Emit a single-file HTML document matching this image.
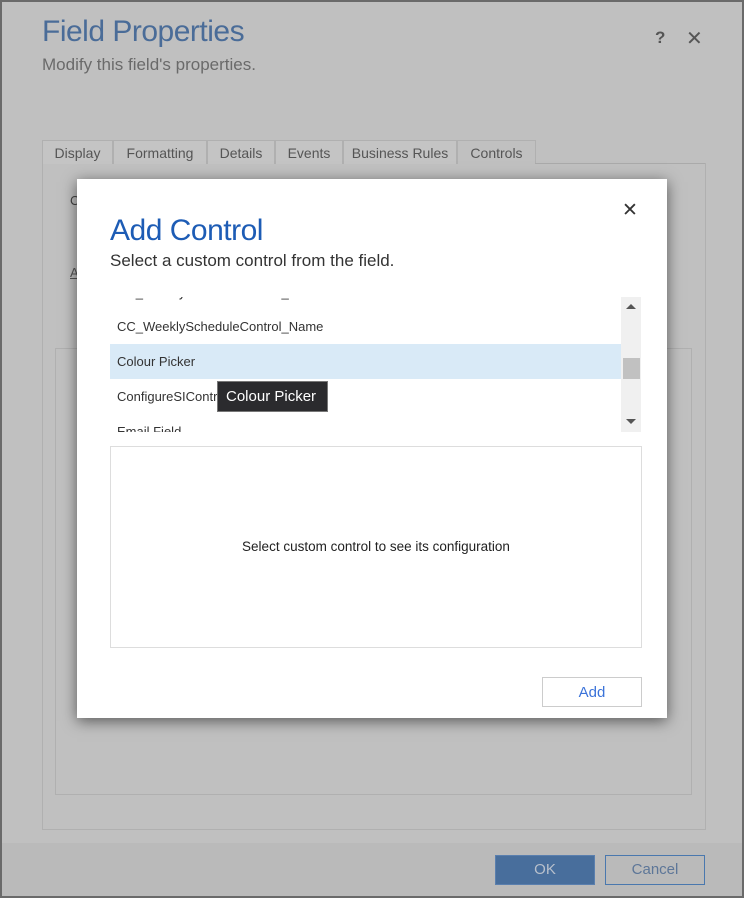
<!DOCTYPE html>
<html><head><style>
*{margin:0;padding:0;box-sizing:border-box}
body{width:744px;height:898px;overflow:hidden;background:#c0c0c0;font-family:"Liberation Sans",sans-serif;position:relative}
.a{position:absolute}
.tab{position:absolute;top:140px;height:24px;border:1px solid #b0b0b0;border-bottom:none;font-size:14px;color:#555;text-align:center;line-height:24px;background:#c4c4c4}
</style></head><body>
<div class="a" style="left:0;top:0;width:744px;height:898px;border:2px solid #6a6a6a"></div>
<div class="a" style="left:42px;top:15px;font-size:30px;color:#4a6c98;letter-spacing:-0.5px">Field Properties</div>
<div class="a" style="left:42px;top:55px;font-size:17px;color:#6a6a6a">Modify this field's properties.</div>
<div class="a" style="left:655px;top:28px;font-size:17px;color:#555;font-weight:bold">?</div>
<div class="a" style="left:686px;top:26px;font-size:20px;color:#555">✕</div>
<div class="tab" style="left:42px;width:71px">Display</div>
<div class="tab" style="left:113px;width:94px">Formatting</div>
<div class="tab" style="left:207px;width:68px">Details</div>
<div class="tab" style="left:275px;width:68px">Events</div>
<div class="tab" style="left:343px;width:114px">Business Rules</div>
<div class="tab" style="left:457px;width:79px;background:#c0c0c0">Controls</div>
<div class="a" style="left:535px;top:163px;width:171px;height:1px;background:#aaa"></div>
<div class="a" style="left:42px;top:163px;width:664px;height:667px;border:1px solid #b0b0b0;border-top:none"></div>
<div class="a" style="left:55px;top:348px;width:637px;height:447px;border:1px solid #b0b0b0"></div>
<div class="a" style="left:70px;top:265px;font-size:13px;color:#555;text-decoration:underline">A</div>
<div class="a" style="left:70px;top:193px;font-size:13px;color:#444">C</div>
<div class="a" style="left:2px;top:843px;width:740px;height:53px;background:#bababa"></div>
<div class="a" style="left:495px;top:855px;width:100px;height:30px;background:#486e9c;border:1px solid #5a7fae;color:#b8c0cc;font-size:15px;text-align:center;line-height:28px">OK</div>
<div class="a" style="left:605px;top:855px;width:100px;height:30px;border:1px solid #4a78ae;color:#5d7698;font-size:15px;text-align:center;line-height:28px">Cancel</div>

<div class="a" style="left:77px;top:179px;width:590px;height:539px;background:#fff;box-shadow:0 3px 14px rgba(0,0,0,.55)">
<div class="a" style="left:545px;top:20px;font-size:19px;color:#333">✕</div>
<div class="a" style="left:33px;top:35px;font-size:30px;color:#1d5cb5;letter-spacing:-0.5px">Add Control</div>
<div class="a" style="left:33px;top:72px;font-size:17px;color:#333">Select a custom control from the field.</div>
<div class="a" style="left:33px;top:118px;width:531px;height:135px;overflow:hidden">
 <div class="a" style="left:7px;top:-12px;font-size:13px;color:#333">CC_WeeklyScheduleControl_Name</div>
 <div class="a" style="left:7px;top:22px;font-size:13px;color:#333">CC_WeeklyScheduleControl_Name</div>
 <div class="a" style="left:0;top:47px;width:511px;height:35px;background:#d9eaf7"></div>
 <div class="a" style="left:7px;top:57px;font-size:13px;color:#333">Colour Picker</div>
 <div class="a" style="left:7px;top:92px;font-size:13px;color:#333">ConfigureSIControl</div>
 <div class="a" style="left:7px;top:127px;font-size:13px;color:#333">Email Field</div>
 <div class="a" style="left:511px;top:0;width:20px;height:135px;background:#f0f0f0"></div>
 <div class="a" style="left:513px;top:61px;width:17px;height:21px;background:#c1c1c1"></div>
 <div class="a" style="left:516px;top:7px;width:0;height:0;border-left:5px solid transparent;border-right:5px solid transparent;border-bottom:5px solid #555"></div>
 <div class="a" style="left:516px;top:122px;width:0;height:0;border-left:5px solid transparent;border-right:5px solid transparent;border-top:5px solid #555"></div>
</div>
<div class="a" style="left:140px;top:202px;width:111px;height:31px;background:#2b2b2e;border:1px solid #777;color:#fff;font-size:15px;line-height:29px;padding-left:8px">Colour Picker</div>
<div class="a" style="left:33px;top:267px;width:532px;height:202px;border:1px solid #ddd;text-align:center;font-size:13.5px;color:#222;line-height:200px">Select custom control to see its configuration</div>
<div class="a" style="left:465px;top:498px;width:100px;height:30px;border:1px solid #ccc;color:#3b73d9;font-size:15px;text-align:center;line-height:30px">Add</div>
</div>
</body></html>
